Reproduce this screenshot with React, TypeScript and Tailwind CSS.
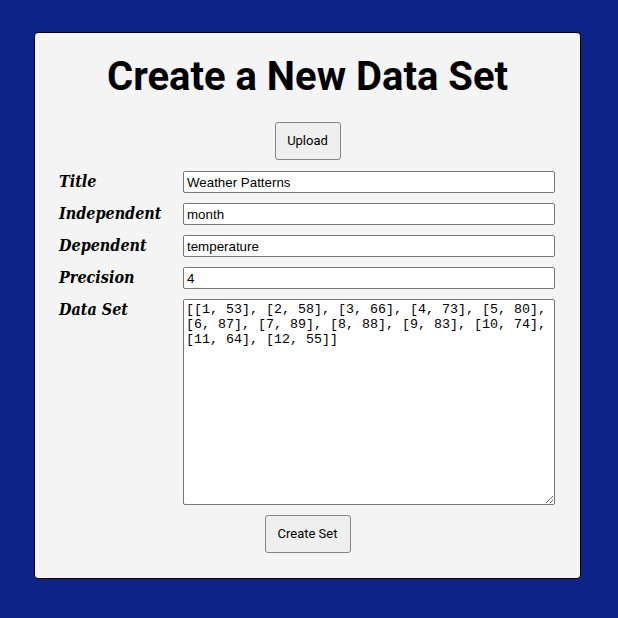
import React from "react";

const rows = [
  { label: "Title", value: "Weather Patterns" },
  { label: "Independent", value: "month" },
  { label: "Dependent", value: "temperature" },
  { label: "Precision", value: "4" },
];

const labelStyle: React.CSSProperties = {
  fontFamily: "'DejaVu Serif Condensed', 'DejaVu Serif', serif",
  fontStretch: "condensed",
};

export default function App() {
  return (
    <div className="w-[618px] h-[618px] bg-[#0c2388] pt-[32px] pl-[34px]">
      <div className="w-[547px] h-[547px] bg-[#f4f4f4] border border-black rounded-[4px] pl-[24px] pr-[24px] flex flex-col">
        <h1 className="text-center font-bold text-[40px] leading-[48px] mt-[20px] text-black" style={{ fontFamily: "Roboto, sans-serif" }}>
          Create a New Data Set
        </h1>
        <div className="flex justify-center mt-[21px]">
          <button className="w-[66px] h-[38px] bg-[#efefef] border border-[#858585] rounded-[3px] text-[13px] text-black" style={{ fontFamily: "Roboto, sans-serif" }}>
            Upload
          </button>
        </div>
        <div className="mt-[11px] flex flex-col gap-[10px]">
          {rows.map((r) => (
            <div key={r.label} className="flex items-center">
              <label className="w-[124px] font-bold italic text-[16px] leading-[22px] text-black" style={labelStyle}>
                {r.label}
              </label>
              <input
                defaultValue={r.value}
                className="w-[372px] h-[22px] bg-white border border-[#767676] rounded-[2px] px-[3px] text-[13.33px] text-black"
                style={{ fontFamily: "'Liberation Sans', Arial, sans-serif" }}
              />
            </div>
          ))}
          <div className="flex items-start">
            <label className="w-[124px] font-bold italic text-[16px] text-black leading-[22px]" style={labelStyle}>
              Data Set
            </label>
            <textarea
              defaultValue="[[1, 53], [2, 58], [3, 66], [4, 73], [5, 80], [6, 87], [7, 89], [8, 88], [9, 83], [10, 74], [11, 64], [12, 55]]"
              className="w-[372px] h-[206px] bg-white border border-[#767676] rounded-[2px] px-[2px] py-[2px] text-[13.33px] leading-[15px] text-black resize"
              style={{ fontFamily: "'Liberation Mono', monospace" }}
            />
          </div>
        </div>
        <div className="flex justify-center mt-[10px]">
          <button className="w-[86px] h-[38px] bg-[#efefef] border border-[#858585] rounded-[3px] text-[13px] text-black" style={{ fontFamily: "Roboto, sans-serif" }}>
            Create Set
          </button>
        </div>
      </div>
    </div>
  );
}
